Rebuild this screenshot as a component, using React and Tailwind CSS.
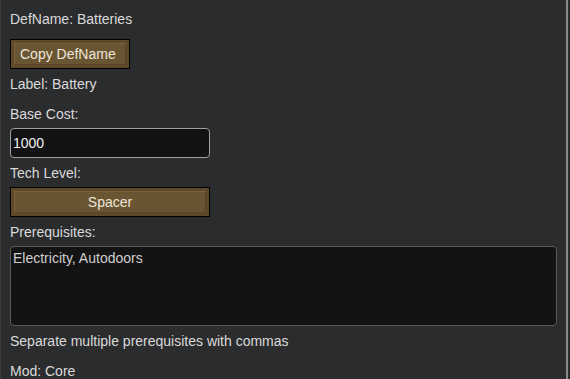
import React, { useState } from "react";

function WoodButton({ children, className = "", center }) {
  return (
    <button
      className={`block border border-black bg-[#5e4a2a] p-[3px] text-[14px] text-[#ece6da] ${className}`}
      style={{ fontFamily: '"Liberation Sans", Arial, sans-serif' }}
    >
      <div
        className={`h-full w-full bg-[#6a5532] shadow-[inset_1px_1px_0_#78613b,inset_-1px_-1px_0_#584527] flex items-center ${center ? "justify-center" : "px-[6px]"}`}
      >
        {children}
      </div>
    </button>
  );
}

export default function App() {
  const [cost, setCost] = useState("1000");
  const [prereq, setPrereq] = useState("Electricity, Autodoors");

  return (
    <div
      className="relative h-[379px] w-[570px] overflow-hidden bg-[#2b2c2e] border-l border-[#3b3c3e] text-[14px] text-[#dadada]"
      style={{ fontFamily: '"Liberation Sans", Arial, sans-serif' }}
    >
      <div className="pl-[9px] pr-[12px] pt-[9px]">
        <div className="h-[20px] leading-[20px]">DefName: Batteries</div>
        <WoodButton className="mt-[10px] h-[30px] w-[120px]">Copy DefName</WoodButton>
        <div className="mt-[5px] h-[20px] leading-[20px]">Label: Battery</div>
        <div className="mt-[10px] h-[20px] leading-[20px]">Base Cost:</div>
        <input
          value={cost}
          onChange={(e) => setCost(e.target.value)}
          className="mt-[4px] block h-[30px] w-[200px] rounded-[4px] border border-[#a0a0a0] bg-[#131313] px-[2px] text-[14px] text-[#f0f0f0] outline-none"
          style={{ fontFamily: '"Liberation Sans", Arial, sans-serif' }}
        />
        <div className="mt-[5px] h-[20px] leading-[20px]">Tech Level:</div>
        <WoodButton center className="mt-[4px] h-[30px] w-[200px]">Spacer</WoodButton>
        <div className="mt-[5px] h-[20px] leading-[20px]">Prerequisites:</div>
        <textarea
          value={prereq}
          onChange={(e) => setPrereq(e.target.value)}
          className="mt-[4px] block h-[80px] w-[547px] resize-none rounded-[4px] border border-[#5a5a5a] bg-[#131313] px-[2px] py-[2px] text-[14px] leading-[18px] text-[#d0d0d0] outline-none"
          style={{ fontFamily: '"Liberation Sans", Arial, sans-serif' }}
        />
        <div className="mt-[5px] h-[20px] leading-[20px]">Separate multiple prerequisites with commas</div>
        <div className="mt-[10px] h-[20px] leading-[20px]">Mod: Core</div>
      </div>
      <div className="absolute right-[2px] top-0 h-full w-[2px] bg-[#8a8a8a]" />
    </div>
  );
}
